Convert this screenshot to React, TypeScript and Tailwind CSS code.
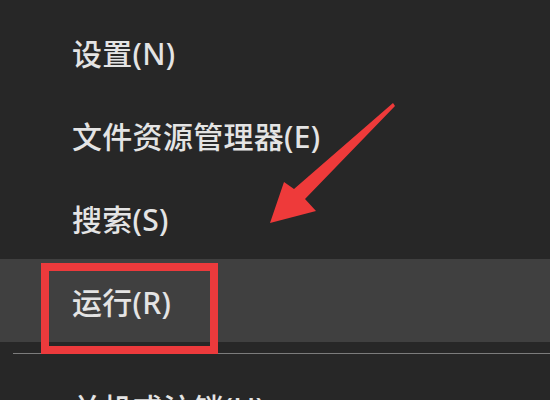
export default function App() {
  const items = [
    { label: "设置(N)", active: false },
    { label: "文件资源管理器(E)", active: false },
    { label: "搜索(S)", active: false },
    { label: "运行(R)", active: true },
  ];

  return (
    <div
      className="relative w-[550px] h-[400px] overflow-hidden bg-[#272727] text-[#e4e4e4]"
      style={{ fontFamily: '"Noto Sans", "Noto Sans CJK SC", sans-serif' }}
    >
      <div className="pt-[10px]">
        {items.map((item) => (
          <div
            key={item.label}
            className={`h-[83px] flex items-center pl-[72px] pt-1 text-[30px] leading-none font-medium tracking-[0.3px] ${
              item.active ? "bg-[#404040]" : ""
            }`}
          >
            {item.label}
          </div>
        ))}
        {/* separator */}
        <div className="h-[23px] flex items-center pl-[13px]">
          <div className="w-full h-px bg-[#7c7c7c]" />
        </div>
        <div className="h-[83px] flex items-center pl-[72px] pt-1 text-[30px] leading-none font-medium tracking-[0.3px]">
          关机或注销(U)
        </div>
      </div>

      {/* red highlight box */}
      <div className="absolute left-[41px] top-[263px] w-[177px] h-[91px] border-[8px] border-[#ec3a3c]" />

      {/* arrow */}
      <svg
        className="absolute inset-0 pointer-events-none"
        width="550"
        height="400"
        viewBox="0 0 550 400"
      >
        <polygon
          points="270,223 284,182 294,189 393,103 395,106 305,199 316,211"
          fill="#ee3a3a"
        />
      </svg>
    </div>
  );
}
